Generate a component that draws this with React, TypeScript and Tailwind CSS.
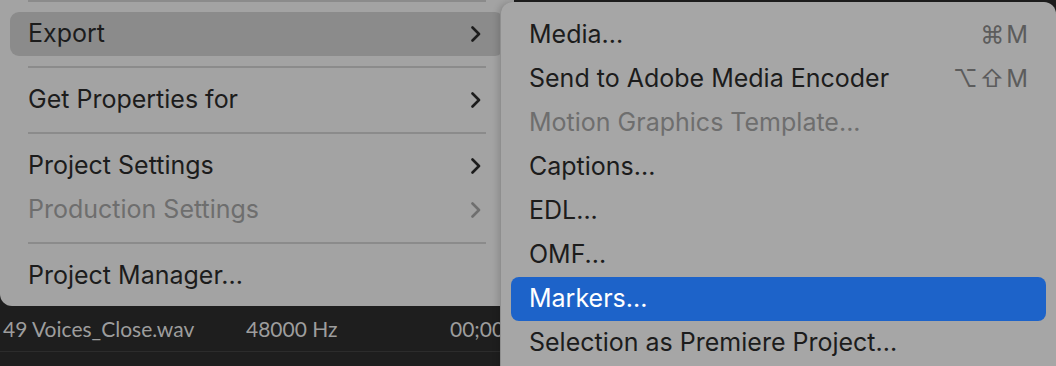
import React from "react";

const Chevron: React.FC<{ dim?: boolean }> = ({ dim }) => (
  <svg width="12" height="16" viewBox="0 0 12 16" className="shrink-0">
    <polyline
      points="2.5,1.5 9,8 2.5,14.5"
      fill="none"
      stroke={dim ? "#6f6f6f" : "#1c1c1c"}
      strokeWidth="2.6"
      strokeLinecap="round"
      strokeLinejoin="round"
    />
  </svg>
);

const Separator: React.FC = () => (
  <div className="h-[22px] flex items-center px-[28px]">
    <div className="h-[2px] w-full bg-[#8b8b8b]" />
  </div>
);

interface ItemProps {
  label: string;
  submenu?: boolean;
  disabled?: boolean;
  active?: boolean;
}

const MainItem: React.FC<ItemProps> = ({ label, submenu, disabled, active }) => (
  <div
    className={`h-[44px] mx-[10px] rounded-[9px] flex items-center justify-between pl-[18px] pr-[22px] ${
      active ? "bg-[#8b8b8b]" : ""
    }`}
  >
    <span className={disabled ? "text-[#6e6e6e]" : "text-[#1c1c1c]"}>{label}</span>
    {submenu && <Chevron dim={disabled} />}
  </div>
);

interface SubProps {
  label: string;
  shortcut?: string;
  disabled?: boolean;
  active?: boolean;
}

const SubItem: React.FC<SubProps> = ({ label, shortcut, disabled, active }) => (
  <div
    className={`h-[44px] mx-[10px] rounded-[8px] flex items-center justify-between pl-[18px] pr-[16px] ${
      active ? "bg-[#1d63c9] text-white" : disabled ? "text-[#6e6e6e]" : "text-[#1c1c1c]"
    }`}
  >
    <span>{label}</span>
    {shortcut && (
      <span className="text-[#5c5c5c] text-[24px] tracking-[2px] font-['Inter','DejaVu_Sans',sans-serif]">
        {shortcut}
      </span>
    )}
  </div>
);

export default function App() {
  return (
    <div className="relative w-[1056px] h-[366px] overflow-hidden bg-[#1e1e1e] font-['Inter','DejaVu_Sans',sans-serif] text-[25px]">
      <div className="w-[514px] -mt-[10px] pb-[8px] bg-[#a3a3a3] rounded-bl-[12px]">
        <Separator />
        <MainItem label="Export" submenu active />
        <Separator />
        <MainItem label="Get Properties for" submenu />
        <Separator />
        <MainItem label="Project Settings" submenu />
        <MainItem label="Production Settings" submenu disabled />
        <Separator />
        <MainItem label="Project Manager..." />
      </div>

      <div className="flex items-center h-[46px] w-[500px] overflow-hidden whitespace-nowrap border-b border-[#2c2c2c] text-[#9d9d9d] text-[21px] font-['Lato',sans-serif]">
        <span className="pl-[3px] w-[246px] shrink-0">49 Voices_Close.wav</span>
        <span className="w-[204px] shrink-0">48000 Hz</span>
        <span className="shrink-0">00;00</span>
      </div>

      <div className="absolute left-[500px] top-[2px] w-[556px] h-[380px] pt-[11px] bg-[#a6a6a6] rounded-t-[12px] border-l border-[#8f8f8f] shadow-[-2px_0_6px_rgba(0,0,0,0.15)]">
        <SubItem label="Media..." shortcut="⌘M" />
        <SubItem label="Send to Adobe Media Encoder" shortcut="⌥⇧M" />
        <SubItem label="Motion Graphics Template..." disabled />
        <SubItem label="Captions..." />
        <SubItem label="EDL..." />
        <SubItem label="OMF..." />
        <SubItem label="Markers..." active />
        <SubItem label="Selection as Premiere Project..." />
      </div>
    </div>
  );
}
